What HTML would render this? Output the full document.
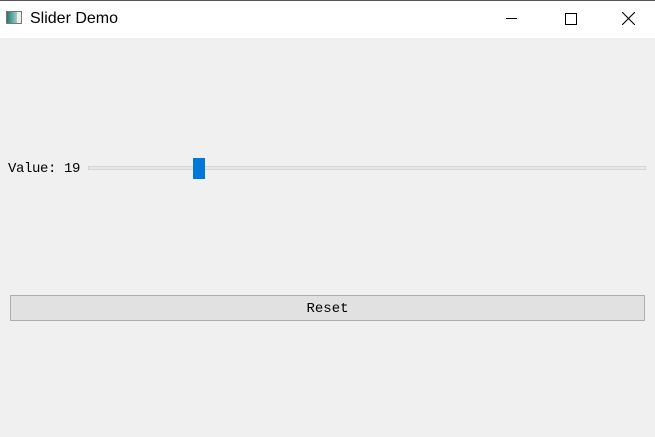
<html><body style="margin:0;width:655px;height:437px;background:#f0f0f0;position:relative;overflow:hidden;font-family:'Liberation Sans',sans-serif">
<div style="position:absolute;left:0;top:0;width:655px;height:38px;background:#fff;border-top:1px solid #555;box-sizing:border-box"></div>
<div style="position:absolute;left:6px;top:11px;width:16px;height:13px;border:1px solid #777;background:linear-gradient(90deg,#2a7a6a,#9cc 70%,#eee 70%);box-sizing:border-box"></div>
<div style="position:absolute;left:30px;top:10px;font-size:16px;color:#000">Slider Demo</div>
<div style="position:absolute;left:506px;top:18px;width:11px;height:1px;background:#000"></div>
<div style="position:absolute;left:565px;top:13px;width:10px;height:10px;border:1px solid #000"></div>
<svg style="position:absolute;left:622px;top:12px" width="13" height="13"><path d="M0 0L13 13M13 0L0 13" stroke="#000" stroke-width="1.1"/></svg>
<div style="position:absolute;left:8px;top:161px;font-family:'Liberation Mono',monospace;font-size:14px;letter-spacing:-0.4px;color:#000">Value: 19</div>
<div style="position:absolute;left:88px;top:166px;width:558px;height:4px;background:#e7e7e7;border:1px solid #d6d6d6;box-sizing:border-box"></div>
<div style="position:absolute;left:193px;top:158px;width:12px;height:21px;background:#0078d7"></div>
<div style="position:absolute;left:10px;top:295px;width:635px;height:26px;background:#e1e1e1;border:1px solid #adadad;box-sizing:border-box;text-align:center;line-height:26px;font-family:'Liberation Mono',monospace;font-size:14px">Reset</div>
</body></html>
